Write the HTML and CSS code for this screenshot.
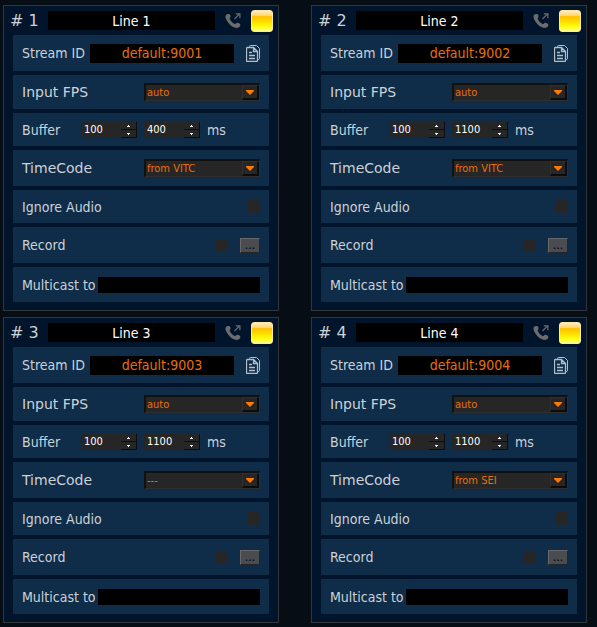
FILE: index.html
```html
<!DOCTYPE html>
<html lang="en">
<head>
<meta charset="utf-8">
<title>Lines</title>
<link rel="stylesheet" href="styles.css">
</head>
<body>
<svg class="sprite" aria-hidden="true">
  <symbol id="call" viewBox="0 0 16 16">
    <path d="M1.200 1.800C2 .9 3.600.6 4.600 1.300C5.600 2.200 5.900 3.600 5.200 4.500C4.500 5.300 4.600 5.900 5.500 7.300C6.600 8.900 8 10.200 9.600 10.900C10.300 11.200 10.700 10.900 11.200 10.300C12 9.500 13.300 9.700 14.500 10.600C15.600 11.500 15.700 12.500 14.800 13.600C13.500 15.300 11.300 15.500 8.800 14.300C5.600 12.800 2.300 9.200.8 5.400C.2 3.800.4 2.600 1.200 1.800Z" fill="#6c6c6c"/>
    <path d="M9.500 6L14.800.7M10.800.8H14.900V5.200" fill="none" stroke="#6c6c6c" stroke-width="1.200"/>
  </symbol>
  <symbol id="copy" viewBox="0 0 14 17">
    <g fill="none" stroke="#b4bec8">
      <path d="M3.500 2V1.500Q3.500.5 4.500.5H10.500L13.500 3.500V13.500Q13.500 14.500 12.500 14.500H11.500"/>
      <path d="M1.500 2.500H7.500L11.500 6.500V15.500Q11.500 16.500 10.500 16.500H1.500Q.5 16.500.5 15.500V3.500Q.5 2.500 1.500 2.500ZM7.500 3V6.500H11" stroke-width="1.300"/>
      <path d="M3 7.500H6M3 10.500H9M3 13.500H9" stroke-width="1.300"/>
    </g>
  </symbol>
</svg>
<main class="lines" id="lines"></main>
<script src="app.js"></script>
</body>
</html>
```
FILE: styles.css
```css
* { box-sizing: border-box; }

body {
  margin: 0;
  background: #060d14;
  color: #ccd2d6;
  font: 14px/18px "DejaVu Sans Condensed", "Noto Sans", sans-serif;
}

button, input, select {
  margin: 0;
  padding: 0;
  border: 0;
  border-radius: 0;
  outline: 0;
  font: inherit;
  color: inherit;
  appearance: none;
}

.sprite { position: absolute; width: 0; height: 0; }

.lines {
  display: grid;
  grid-template-columns: 1fr 1fr;
  gap: 6px 32px;
  padding: 5px 10px 4px 3px;
}

.card {
  display: flex;
  flex-direction: column;
  gap: 4px;
  min-width: 0;
  padding: 0 9px 8px;
  border: 1px solid #333638;
  background: #00142b;
}

.head {
  display: flex;
  align-items: center;
  height: 29px;
  margin: 0 -4px -4px -3px;
}

.number {
  width: 38px;
  margin: 0;
  font: 16px/20px "DejaVu Sans", sans-serif;
}

.name, .stream, .multicast {
  flex: 1;
  min-width: 0;
  height: 19px;
  background: #000;
  text-align: center;
}
.name { color: #fff; }
.stream { color: #e8700a; }
.multicast { height: 16px; }

.icon { display: block; background: none; }
.icon svg { display: block; width: 100%; height: 100%; }
.call { width: 16px; height: 16px; margin: 0 10px; }
.copy { width: 14px; height: 17px; margin-left: 12px; }

.lamp {
  width: 22px;
  height: 22px;
  border: 1px solid #ffe9a0;
  border-radius: 3px;
  background: linear-gradient(#ffedc4, #ffd468 24%, #ffc000 28%, #ffe000 55%, #ffff10 80%, #ffff90);
}

.row {
  display: flex;
  align-items: center;
  height: 36px;
  padding: 0 9px;
  background: #0f2c49;
}
.row.short { height: 33px; }
.row.mid { height: 34px; }
.row.last { height: 35px; }
.row label { white-space: nowrap; }
.row label.wide { font-family: "DejaVu Sans", sans-serif; }
.stream { margin-left: 5px; }
.multicast { margin-left: 2px; }

.push { margin-left: auto; }

.select { position: relative; width: 116px; height: 18px; }
.select select {
  display: block;
  width: 100%;
  height: 100%;
  padding-left: 1px;
  border: 2px solid #111;
  border-right: 1px solid #2e2e2e;
  border-bottom: 1px solid #2e2e2e;
  background: #262626;
  color: #e8700a;
  font-size: 11px;
  line-height: 15px;
}
.arrow {
  position: absolute;
  top: 2px;
  right: 1px;
  width: 17px;
  height: 15px;
  border: 1px solid #303030;
  border-right: 2px solid #0c0c0c;
  border-bottom: 2px solid #0c0c0c;
  pointer-events: none;
}
.arrow svg { display: block; width: 14px; height: 12px; }

.buffer label { width: 59px; }
.spin {
  display: flex;
  width: 56px;
  height: 16px;
  margin-right: 7px;
  background: #262626;
}
.spin input {
  width: 40px;
  padding-left: 3px;
  background: none;
  color: #fff;
  font-size: 11px;
}
.steps { display: flex; flex-direction: column; width: 16px; }
.steps button {
  height: 8px;
  border-right: 1px solid #0c0c0c;
  border-bottom: 1px solid #0c0c0c;
  background: #262626;
}
.steps svg { display: block; width: 15px; height: 7px; }

.check { width: 13px; height: 13px; background: #262626; }
.check + .more { margin-left: 12px; }
.more {
  width: 20px;
  height: 15px;
  border: 1px solid #66686c;
  border-right-color: #242424;
  border-bottom-color: #242424;
  background: #4b4c50;
  color: #000;
  font-size: 12px;
  line-height: 13px;
}
```
FILE: app.js
```js
const lines = [
  { id: 1, delay: 400, timecode: "from VITC" },
  { id: 2, delay: 1100, timecode: "from VITC" },
  { id: 3, delay: 1100, timecode: "---" },
  { id: 4, delay: 1100, timecode: "from SEI" },
];

const select = (id, value) => `
  <div class="select push">
    <select id="${id}"><option>${value}</option></select>
    <span class="arrow"><svg viewBox="0 0 14 12"><path d="M3 4H11V5L7 9L3 5Z" fill="#ff7800"/></svg></span>
  </div>`;

const spin = (id, value, label) => `
  <div class="spin">
    <input id="${id}" type="text" inputmode="numeric" value="${value}" aria-label="${label}">
    <span class="steps">
      <button type="button" aria-label="Increase"><svg viewBox="0 0 15 7"><path d="M6 5V4H7V3H8V4H9V5Z" fill="#fff"/></svg></button>
      <button type="button" aria-label="Decrease"><svg viewBox="0 0 15 7"><path d="M6 3V4H7V5H8V4H9V3Z" fill="#fff"/></svg></button>
    </span>
  </div>`;

const card = ({ id, delay, timecode }) => `
  <section class="card">
    <header class="head">
      <h2 class="number"># ${id}</h2>
      <input class="name" type="text" value="Line ${id}" aria-label="Name">
      <button class="icon call" type="button" aria-label="Call"><svg><use href="#call"/></svg></button>
      <button class="lamp" type="button" aria-label="Status"></button>
    </header>
    <div class="row">
      <label for="stream${id}">Stream ID</label>
      <input class="stream" id="stream${id}" type="text" value="default:900${id}">
      <button class="icon copy" type="button" aria-label="Copy"><svg><use href="#copy"/></svg></button>
    </div>
    <div class="row mid">
      <label class="wide" for="fps${id}">Input FPS</label>${select("fps" + id, "auto")}
    </div>
    <div class="row short buffer">
      <label for="min${id}">Buffer</label>
      ${spin("min" + id, 100, "Buffer minimum")}${spin("max" + id, delay, "Buffer maximum")}
      <span>ms</span>
    </div>
    <div class="row">
      <label class="wide" for="tc${id}">TimeCode</label>${select("tc" + id, timecode)}
    </div>
    <div class="row short">
      <label for="mute${id}">Ignore Audio</label>
      <input class="check push" id="mute${id}" type="checkbox">
    </div>
    <div class="row">
      <label for="rec${id}">Record</label>
      <input class="check push" id="rec${id}" type="checkbox">
      <button class="more" type="button" aria-label="Record options">...</button>
    </div>
    <div class="row last">
      <label for="multi${id}">Multicast to</label>
      <input class="multicast" id="multi${id}" type="text">
    </div>
  </section>`;

document.getElementById("lines").innerHTML = lines.map(card).join("");
```
